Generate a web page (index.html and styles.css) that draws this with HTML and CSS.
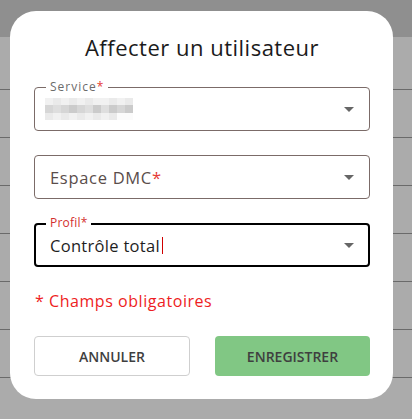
FILE: index.html
```html
<!DOCTYPE html>
<html lang="fr">
<head>
<meta charset="utf-8">
<title>Affecter un utilisateur</title>
<link rel="stylesheet" href="styles.css">
</head>
<body>
<div class="backdrop">
  <div class="topbar"></div>
  <div class="row first"></div>
  <div class="row"></div>
  <div class="row"></div>
  <div class="row"></div>
  <div class="row"></div>
  <div class="row"></div>
  <div class="row"></div>
</div>

<div class="dialog" role="dialog">
  <h1 class="title">Affecter un utilisateur</h1>

  <div class="fields">
    <div class="field">
      <span class="label wide">Service<span class="req">*</span></span>
      <div class="value">
        <div class="blur">
          <span class="b l1"></span><span class="b l2"></span><span class="b l1"></span><span class="b l2"></span><span class="b l1"></span><span class="b l2"></span><span class="b l1"></span><span class="b l1"></span><span class="b l2"></span><span class="b l1"></span><span class="b l2"></span>
          <span class="b m1"></span><span class="b m2"></span><span class="b m1"></span><span class="b m3"></span><span class="b m1"></span><span class="b m2"></span><span class="b m3"></span><span class="b m2"></span><span class="b m3"></span><span class="b m1"></span><span class="b m3"></span>
          <span class="b l2"></span><span class="b l1"></span><span class="b l2"></span><span class="b l1"></span><span class="b l2"></span><span class="b l1"></span><span class="b l2"></span><span class="b l1"></span><span class="b l2"></span><span class="b l0"></span><span class="b l0"></span>
        </div>
      </div>
      <span class="arrow"></span>
    </div>

    <div class="field">
      <div class="value placeholder">Espace DMC<span class="req">*</span></div>
      <span class="arrow"></span>
    </div>

    <div class="field focused">
      <span class="label error">Profil*</span>
      <div class="value filled">Contrôle total<span class="caret"></span></div>
      <span class="arrow"></span>
    </div>
  </div>

  <p class="note">* Champs obligatoires</p>

  <div class="actions">
    <button class="btn cancel" type="button">ANNULER</button>
    <button class="btn save" type="button">ENREGISTRER</button>
  </div>
</div>
</body>
</html>
```

FILE: styles.css
```css
* { box-sizing: border-box; }

html, body {
  margin: 0;
  padding: 0;
  height: 100%;
}

body {
  background: #ababab;
  font-family: "Open Sans", "Liberation Sans", sans-serif;
  overflow: hidden;
  position: relative;
}

.backdrop {
  display: flex;
  flex-direction: column;
}

.topbar {
  height: 37px;
  background: #8f8f8f;
}

.row {
  height: 48px;
  border-bottom: 1px solid #6a6a6a;
}

.row.first {
  height: 53px;
}

.dialog {
  position: absolute;
  left: 10px;
  top: 11px;
  width: 383px;
  height: 388px;
  background: #fff;
  border-radius: 26px;
  padding: 20px 23px 0 24px;
  display: flex;
  flex-direction: column;
}

.title {
  margin: 0;
  font-size: 22px;
  font-weight: 400;
  letter-spacing: 0.5px;
  color: #1b1b1b;
  text-align: center;
  line-height: 32px;
}

.fields {
  margin-top: 24px;
  display: flex;
  flex-direction: column;
  gap: 24px;
}

.field {
  position: relative;
  height: 44px;
  border: 1px solid #7b6b68;
  border-radius: 4px;
  display: flex;
  align-items: center;
  padding: 0 15px;
}

.field.focused {
  border: 2px solid #000;
  padding: 0 14px;
}

.label {
  position: absolute;
  left: 11px;
  top: -8px;
  padding: 0 4px;
  background: #fff;
  font-size: 12px;
  line-height: 14px;
  color: #6b6b6b;
  letter-spacing: 0.2px;
}

.label.wide {
  letter-spacing: 1px;
}

.field.focused .label {
  left: 10px;
  top: -9px;
}

.label.error {
  color: #d32f2f;
}

.req {
  color: #e53935;
}

.value {
  flex: 1;
  display: flex;
  align-items: center;
  font-size: 16.5px;
}

.placeholder {
  color: #5a4d4b;
  letter-spacing: 0.7px;
}

.filled {
  color: #1e1e1e;
  letter-spacing: 0.3px;
}

.caret {
  display: inline-block;
  width: 1px;
  height: 17px;
  background: #d00000;
  margin-left: 2px;
}

.blur {
  display: grid;
  grid-template-columns: repeat(11, 8px);
  grid-auto-rows: 7.5px;
  margin-left: -5px;
}

.b { display: block; }
.l0 { background: #fbfbfb; }
.l1 { background: #f1f1f1; }
.l2 { background: #eaeaea; }
.m1 { background: #d6d6d6; }
.m2 { background: #dedede; }
.m3 { background: #cbcbcb; }

.arrow {
  position: absolute;
  right: 15px;
  top: 50%;
  margin-top: -2px;
  width: 0;
  height: 0;
  border-left: 5px solid transparent;
  border-right: 5px solid transparent;
  border-top: 5px solid #666;
}

.field.focused .arrow {
  right: 14px;
}

.note {
  margin: 23px 0 0 1px;
  font-size: 16px;
  letter-spacing: 0.55px;
  line-height: 22px;
  color: #ee1d23;
}

.actions {
  margin-top: 24px;
  display: flex;
  justify-content: space-between;
}

.btn {
  width: 156px;
  height: 40px;
  border-radius: 4px;
  font-family: inherit;
  font-size: 14px;
  font-weight: 600;
  color: #3f3f3f;
  letter-spacing: 0;
}

.btn.cancel {
  background: #fff;
  border: 1px solid #cfcfcf;
}

.btn.save {
  width: 155px;
  background: #81c784;
  border: none;
}
```
